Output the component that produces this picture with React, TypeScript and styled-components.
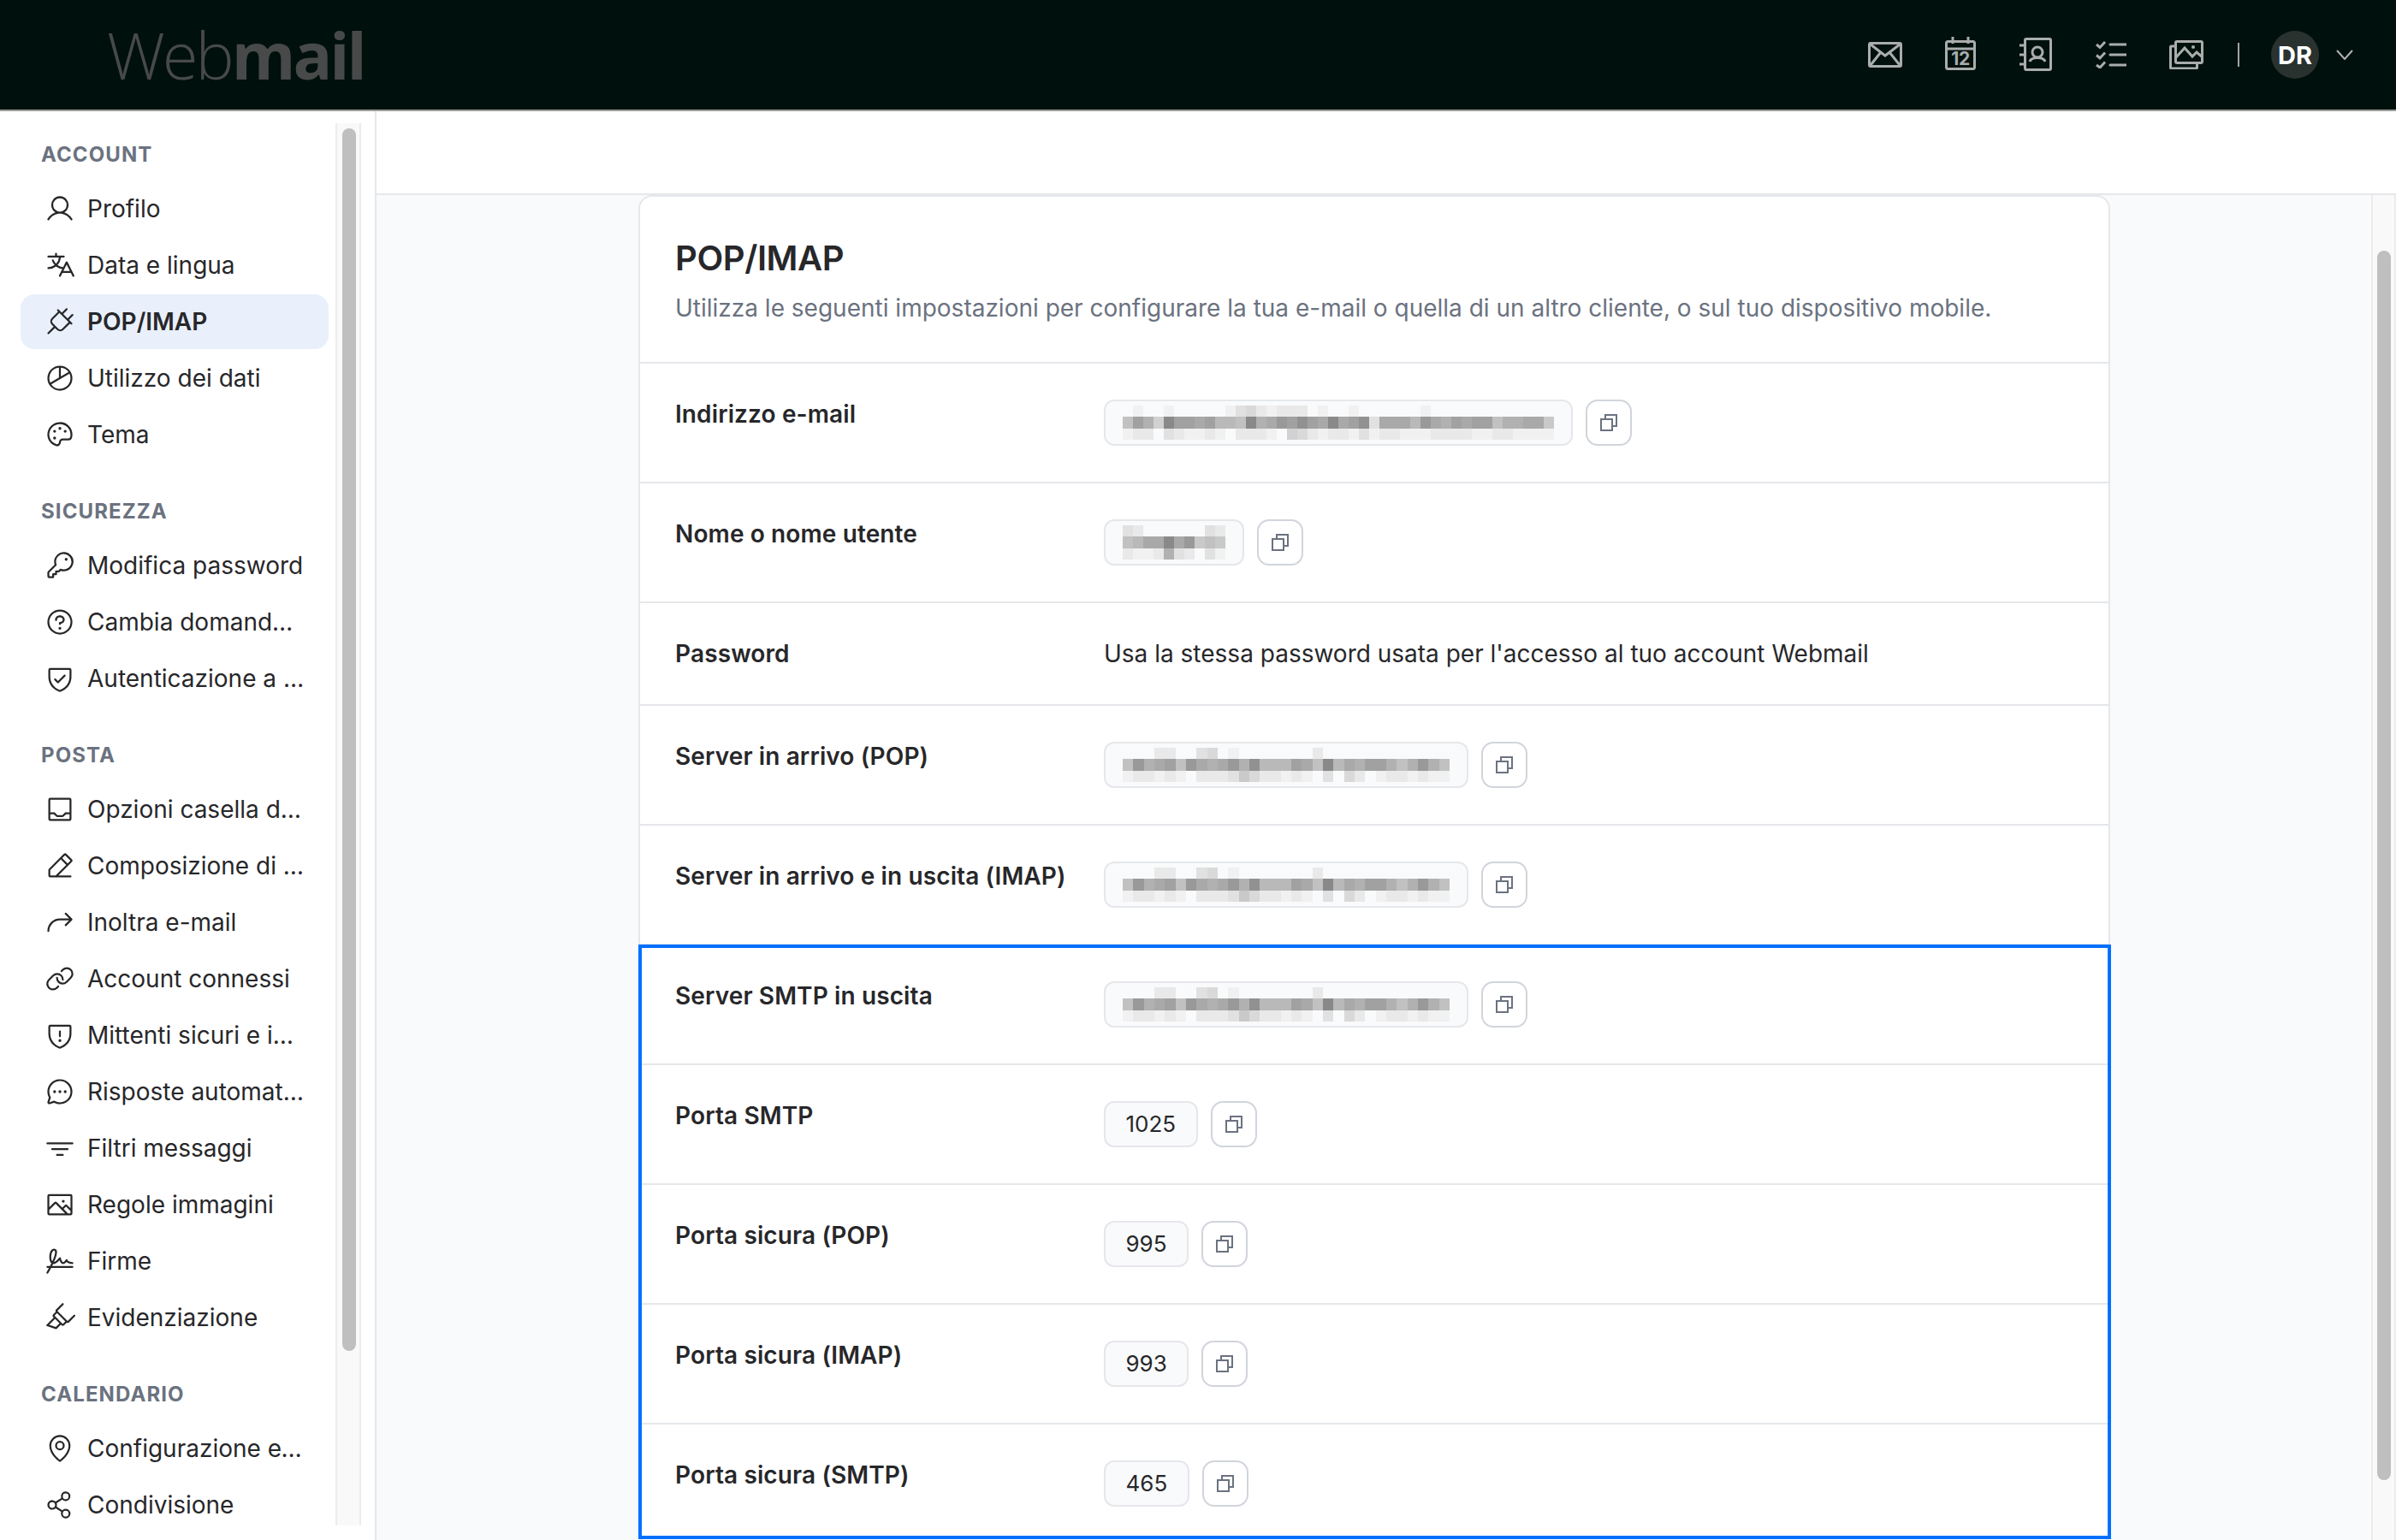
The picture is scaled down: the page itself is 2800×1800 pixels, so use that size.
import React from "react";
import styled, { createGlobalStyle } from "styled-components";
import {
  PiUser, PiTranslate, PiPlug, PiChartPie, PiPalette, PiKey, PiQuestion, PiShieldCheck,
  PiTray, PiPencilSimpleLine, PiArrowBendUpRight, PiLink, PiShieldWarning, PiChatCircleDots,
  PiFunnelSimple, PiImage, PiSignature, PiHighlighter, PiMapPin, PiShareNetwork,
} from "react-icons/pi";

const Global = createGlobalStyle`
  html, body { margin: 0; height: 100%; overflow: hidden; background: #fff; }
  body { font-family: Inter, "Liberation Sans", sans-serif; color: #27272a; }
  *, *::before, *::after { box-sizing: border-box; }
`;

const Shell = styled.div`
  width: 2800px;
  height: 1800px;
  display: flex;
  flex-direction: column;
  overflow: hidden;
`;

const Header = styled.header`
  height: 130px;
  flex: none;
  display: flex;
  align-items: center;
  justify-content: space-between;
  background: #00100d;
  border-bottom: 2px solid #989b98;
  padding: 0 50px 0 125px;
`;

const Logo = styled.div`
  font-family: "Open Sans", sans-serif;
  font-size: 76px;
  line-height: 1;
  letter-spacing: -3px;
  color: #474a49;
  font-weight: 300;
`;
const LogoBold = styled.span`
  font-weight: 700;
`;

const HeaderTools = styled.div`
  display: flex;
  align-items: center;
`;
const ToolCell = styled.div<{ $lift?: number }>`
  width: 88px;
  display: flex;
  justify-content: center;
  padding-bottom: ${(p) => p.$lift ?? 0}px;
  color: #a9adab;
  svg { display: block; fill: none; stroke: currentColor; stroke-width: 3; }
`;
const ToolDivider = styled.div`
  width: 2px;
  height: 28px;
  background: #a0a4a2;
  margin: 0 37px 0 16px;
`;
const Avatar = styled.div`
  width: 56px;
  height: 56px;
  border-radius: 50%;
  background: #29322f;
  color: #fff;
  font-size: 29px;
  font-weight: 700;
  display: flex;
  align-items: center;
  justify-content: center;
`;
const Chevron = styled.svg`
  margin-left: 20px;
  fill: none;
  stroke: #b0b3b1;
  stroke-width: 2;
`;

const Body = styled.div`
  flex: 1;
  min-height: 0;
  display: flex;
`;

const Sidebar = styled.aside`
  width: 440px;
  flex: none;
  border-right: 2px solid #e5e7eb;
  padding: 14px 16px 17px 0;
  display: flex;
`;
const Nav = styled.nav`
  width: 392px;
  flex: none;
  overflow: hidden;
  padding: 19px 8px 0 24px;
`;
const Section = styled.section`
  margin-bottom: 40px;
`;
const SectionLabel = styled.div`
  height: 36px;
  line-height: 36px;
  margin: 0 0 13px;
  padding-left: 24px;
  font-size: 24px;
  font-weight: 700;
  letter-spacing: 1.1px;
  color: #6b7280;
`;
const NavItem = styled.a<{ $active?: boolean }>`
  display: flex;
  align-items: center;
  gap: 14px;
  height: 64px;
  margin-bottom: 2px;
  padding: 0 26px 0 28px;
  border-radius: 16px;
  font-size: 28px;
  font-weight: ${(p) => (p.$active ? 600 : 400)};
  background: ${(p) => (p.$active ? "#e9f0fb" : "transparent")};
  color: #27272a;
  svg { flex: none; width: 36px; height: 36px; }
`;
const NavText = styled.span`
  min-width: 0;
  white-space: nowrap;
  overflow: hidden;
  text-overflow: ellipsis;
`;

const ScrollTrack = styled.div<{ $width: number; $top: number; $height: number; $pad: number }>`
  width: ${(p) => p.$width}px;
  flex: none;
  background: #f9f9f9;
  border-left: 2px solid #ececec;
  border-right: 2px solid #ececec;
  padding: ${(p) => p.$top}px 0 0 ${(p) => p.$pad}px;
  &::before {
    content: "";
    display: block;
    width: 16px;
    height: ${(p) => p.$height}px;
    border-radius: 8px;
    background: #bfbfbf;
  }
`;

const Main = styled.main`
  flex: 1;
  min-width: 0;
  display: flex;
  flex-direction: column;
`;
const TopBar = styled.div`
  height: 98px;
  flex: none;
  background: #fff;
  border-bottom: 2px solid #e5e7eb;
`;
const MainRow = styled.div`
  flex: 1;
  min-height: 0;
  display: flex;
`;
const Content = styled.div`
  flex: 1;
  min-width: 0;
  background: #f9fafb;
  overflow: hidden;
  padding-left: 306px;
`;
const Card = styled.div`
  width: 1720px;
  background: #fff;
  border: 2px solid #e5e7eb;
  border-radius: 16px;
`;
const CardHead = styled.div`
  height: 195px;
  padding: 50px 41px 0;
  border-bottom: 2px solid #e5e7eb;
`;
const Title = styled.h1`
  margin: 0 0 16px;
  font-size: 40px;
  line-height: 44px;
  font-weight: 600;
  letter-spacing: -0.4px;
  color: #27272a;
`;
const Description = styled.p`
  margin: 0;
  font-size: 28px;
  line-height: 40px;
  color: #6b7280;
`;
const Row = styled.div`
  display: grid;
  grid-template-columns: 501px 1fr;
  padding: 40px 41px 38px;
  border-bottom: 2px solid #e5e7eb;
`;
const RowLabel = styled.div`
  font-size: 28px;
  line-height: 38px;
  font-weight: 600;
  letter-spacing: 0.12px;
  color: #27272a;
`;
const RowText = styled.div`
  font-size: 28px;
  line-height: 38px;
  padding-bottom: 2px;
  color: #27272a;
`;
const ValueLine = styled.div`
  display: flex;
  gap: 15px;
  margin: 2px 0 4px;
`;
const Chip = styled.div<{ $text: boolean }>`
  height: 54px;
  display: flex;
  align-items: center;
  padding: 0 ${(p) => (p.$text ? 23.5 : 20)}px ${(p) => (p.$text ? 2 : 0)}px;
  background: #f9fafb;
  border: 2px solid #e5e7eb;
  border-radius: 12px;
  font-size: 26px;
  color: #27272a;
`;
const Mosaic = styled.svg`
  display: block;
`;
const CopyButton = styled.button`
  width: 54px;
  height: 54px;
  padding: 0;
  display: flex;
  align-items: center;
  justify-content: center;
  background: #fff;
  border: 2px solid #d1d5db;
  border-radius: 14px;
  svg { fill: none; stroke: #6b7280; stroke-width: 2; display: block; }
`;
const Highlighted = styled.div`
  position: relative;
  &::after {
    content: "";
    position: absolute;
    left: -2px;
    top: -1px;
    width: 1721px;
    height: 695px;
    border: 4px solid #0070ff;
    pointer-events: none;
  }
`;

const GREY = (c: string) => {
  const g = 249 - parseInt(c, 16) * 8;
  return `rgb(${g},${g},${g + 1})`;
};

type MosaicRows = [string, string, string];

const EMAIL: MosaicRows = [
  "010010000013421222010010000001000000000000",
  "7b95ebbab887e9acbdbaeabd3aaa8ca9babb799aa6",
  "122032112102221054212213122111222211221111",
];
const USER: MosaicRows = ["3200000032", "78aaeac676", "2112932031"];
const SERVER: MosaicRows = [
  "0002200340100000002000000000000",
  "7c9ab7ca9ac9d888ba7e8a9bb979c97",
  "1221210222364221210304201221211",
];

const Pixels = ({ rows, width }: { rows: MosaicRows; width: number }) => {
  const n = rows[1].length;
  return (
    <Mosaic width={width} height={40} viewBox={`0 0 ${n} 3`} preserveAspectRatio="none" shapeRendering="crispEdges">
      {rows.map((row, y) =>
        row.split("").map((c, x) =>
          c === "0" ? null : <rect key={`${x}-${y}`} x={x} y={y} width={1} height={1} fill={GREY(c)} />
        )
      )}
    </Mosaic>
  );
};

const CopyIcon = () => (
  <svg width={20} height={20} viewBox="0 0 20 20">
    <rect x={1} y={6} width={13} height={13} />
    <path d="M6 6V1h13v13h-5" />
  </svg>
);

const Value = ({ children }: { children: React.ReactNode }) => (
  <ValueLine>
    <Chip $text={typeof children === "string"}>{children}</Chip>
    <CopyButton aria-label="Copia"><CopyIcon /></CopyButton>
  </ValueLine>
);

const Field = ({ label, children }: { label: string; children: React.ReactNode }) => (
  <Row>
    <RowLabel>{label}</RowLabel>
    <div>{children}</div>
  </Row>
);

const NAV = [
  { title: "Account", items: [
    ["Profilo", PiUser], ["Data e lingua", PiTranslate], ["POP/IMAP", PiPlug, true],
    ["Utilizzo dei dati", PiChartPie], ["Tema", PiPalette],
  ] },
  { title: "Sicurezza", items: [
    ["Modifica password", PiKey], ["Cambia domanda di sicurezza", PiQuestion], ["Autenticazione a due fattori", PiShieldCheck],
  ] },
  { title: "Posta", items: [
    ["Opzioni casella di posta", PiTray], ["Composizione di messaggi", PiPencilSimpleLine], ["Inoltra e-mail", PiArrowBendUpRight],
    ["Account connessi", PiLink], ["Mittenti sicuri e indesiderati", PiShieldWarning], ["Risposte automatiche", PiChatCircleDots],
    ["Filtri messaggi", PiFunnelSimple], ["Regole immagini", PiImage], ["Firme", PiSignature], ["Evidenziazione", PiHighlighter],
  ] },
  { title: "Calendario", items: [
    ["Configurazione eventi", PiMapPin], ["Condivisione", PiShareNetwork],
  ] },
] as const;

export default function App() {
  return (
    <Shell>
      <Global />
      <Header>
        <Logo>Web<LogoBold>mail</LogoBold></Logo>
        <HeaderTools>
          <ToolCell>
            <svg width={40} height={30} viewBox="0 0 40 30">
              <rect x={1.5} y={1.5} width={37} height={27} rx={1.5} />
              <path d="M3 3l17 13L37 3M3 27l12-15M37 27L25 12" />
            </svg>
          </ToolCell>
          <ToolCell $lift={3}>
            <svg width={36} height={39} viewBox="0 0 36 39">
              <rect x={1.5} y={5.5} width={33} height={32} rx={2} />
              <path d="M9 0v8M27 0v8M1.5 14h33" />
              <text x={18} y={33} textAnchor="middle" fontFamily="Inter, sans-serif" fontSize={21} fontWeight={700} fill="currentColor" stroke="none" letterSpacing={-0.5}>12</text>
            </svg>
          </ToolCell>
          <ToolCell $lift={1}>
            <svg width={38} height={39} viewBox="0 0 38 39">
              <rect x={6.5} y={1.5} width={30} height={36} rx={1.5} />
              <path d="M0 9h6M0 20h6M0 31h6" />
              <circle cx={21} cy={17} r={6} />
              <path d="M12 28c2-6 16-6 18 0" />
            </svg>
          </ToolCell>
          <ToolCell>
            <svg width={36} height={32} viewBox="0 0 36 32">
              <path d="M1 4l4 3.500L11 1M1 16.500l4 3.500 6-6.500M1 28l4 3 6-6.500" />
              <path d="M17 4h19M17 16h19M17 28h19" strokeLinecap="round" />
            </svg>
          </ToolCell>
          <ToolCell>
            <svg width={40} height={34} viewBox="0 0 40 34">
              <rect x={7.500} y={1.500} width={31} height={25} rx={1.500} />
              <path d="M7.500 7H2.500a1 1 0 0 0-1 1v24a1 1 0 0 0 1 1h29a1 1 0 0 0 1-1v-5.500" />
              <path d="M8 20l10-11 9 10 5-5 7 6" />
              <circle cx={28} cy={8} r={2} fill="currentColor" stroke="none" />
            </svg>
          </ToolCell>
          <ToolDivider />
          <Avatar>DR</Avatar>
          <Chevron width={20} height={12} viewBox="0 0 20 12"><path d="M1 1l9 10 9-10" /></Chevron>
        </HeaderTools>
      </Header>
      <Body>
        <Sidebar>
          <Nav>
            {NAV.map((s) => (
              <Section key={s.title}>
                <SectionLabel>{s.title.toUpperCase()}</SectionLabel>
                {s.items.map((it) => {
                  const Icon = it[1] as React.ComponentType;
                  return (
                    <NavItem key={it[0] as string} $active={it.length > 2}>
                      <Icon />
                      <NavText>{it[0] as string}</NavText>
                    </NavItem>
                  );
                })}
              </Section>
            ))}
          </Nav>
          <ScrollTrack $width={30} $top={6} $height={1429} $pad={6} />
        </Sidebar>
        <Main>
          <TopBar />
          <MainRow>
            <Content>
              <Card>
                <CardHead>
                  <Title>POP/IMAP</Title>
                  <Description>Utilizza le seguenti impostazioni per configurare la tua e-mail o quella di un altro cliente, o sul tuo dispositivo mobile.</Description>
                </CardHead>
                <Field label="Indirizzo e-mail"><Value><Pixels rows={EMAIL} width={504} /></Value></Field>
                <Field label="Nome o nome utente"><Value><Pixels rows={USER} width={120} /></Value></Field>
                <Row>
                  <RowLabel>Password</RowLabel>
                  <RowText>Usa la stessa password usata per l'accesso al tuo account Webmail</RowText>
                </Row>
                <Field label="Server in arrivo (POP)"><Value><Pixels rows={SERVER} width={382} /></Value></Field>
                <Field label="Server in arrivo e in uscita (IMAP)"><Value><Pixels rows={SERVER} width={382} /></Value></Field>
                <Highlighted>
                  <Field label="Server SMTP in uscita"><Value><Pixels rows={SERVER} width={382} /></Value></Field>
                  <Field label="Porta SMTP"><Value>1025</Value></Field>
                  <Field label="Porta sicura (POP)"><Value>995</Value></Field>
                  <Field label="Porta sicura (IMAP)"><Value>993</Value></Field>
                  <Field label="Porta sicura (SMTP)"><Value>465</Value></Field>
                </Highlighted>
              </Card>
            </Content>
            <ScrollTrack $width={29} $top={65} $height={1437} $pad={5} />
          </MainRow>
        </Main>
      </Body>
    </Shell>
  );
}
